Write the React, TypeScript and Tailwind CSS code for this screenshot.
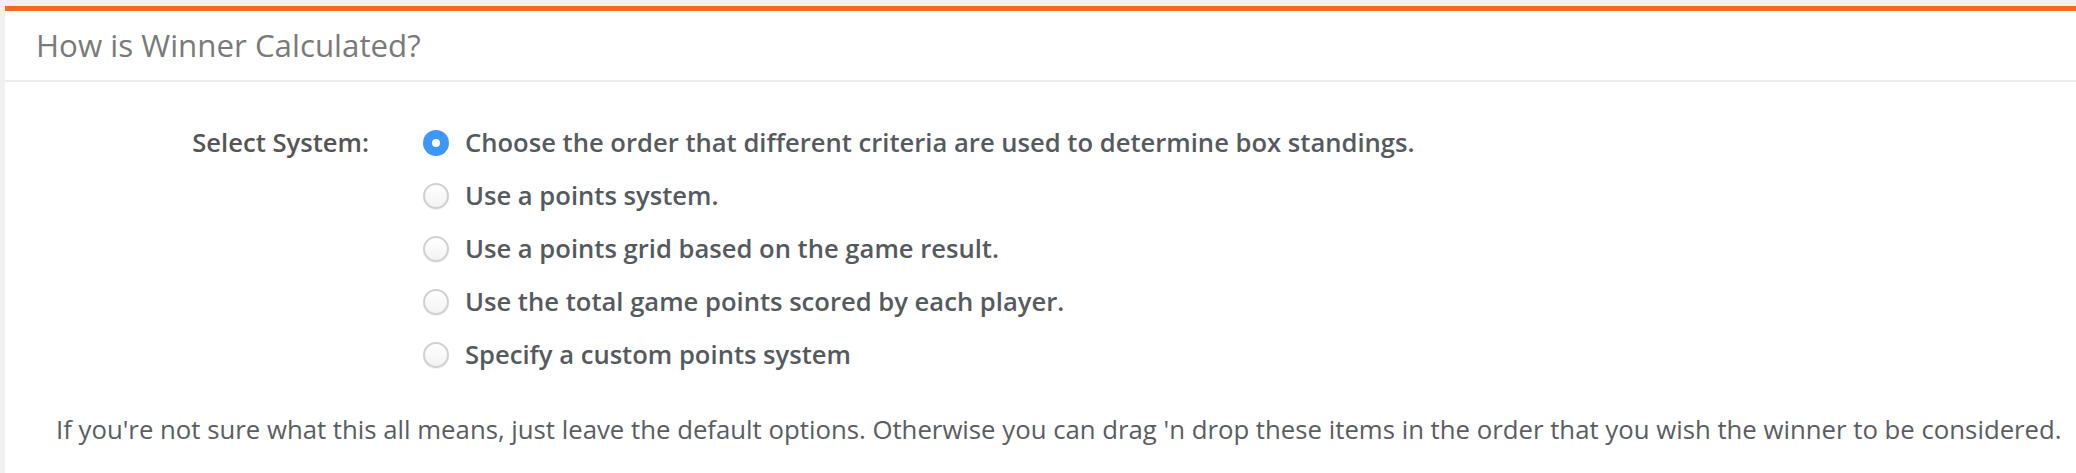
const options = [
  "Choose the order that different criteria are used to determine box standings.",
  "Use a points system.",
  "Use a points grid based on the game result.",
  "Use the total game points scored by each player.",
  "Specify a custom points system",
];

function Radio({ checked }: { checked: boolean }) {
  if (checked) {
    return (
      <span className="flex h-[26px] w-[26px] shrink-0 items-center justify-center rounded-full bg-[#3d97f7]">
        <span className="h-[8px] w-[8px] rounded-full bg-white" />
      </span>
    );
  }
  return (
    <span className="h-[26px] w-[26px] shrink-0 rounded-full border-2 border-[#d0d0d0] bg-gradient-to-b from-white to-[#f3f3f3] shadow-[0_1px_1px_rgba(0,0,0,0.06)]" />
  );
}

export default function App() {
  const selected = 0;
  return (
    <div className="min-h-screen bg-[#f1f1f1] pl-[5px] pt-[6px] font-['Open_Sans',sans-serif]">
      <div className="border-t-[5px] border-[#f26a21] bg-white">
        {/* Header */}
        <div className="flex h-[69px] items-center pl-[31px]">
          <h2 className="text-[31.3px] leading-none font-normal text-[#7a7a7a]">How is Winner Calculated?</h2>
        </div>
        <div className="h-[2px] bg-[#ececec]" />

        {/* Body */}
        <div className="ml-[2px] bg-white pt-[34px] pb-[30px]">
          <div className="flex">
            <div className="w-[362px]">
              <div className="flex h-[53px] items-center justify-end text-[25.6px] leading-none font-semibold text-[#555]">
                Select System:
              </div>
            </div>
            <div className="ml-[54px] flex flex-col">
              {options.map((opt, i) => (
                <label key={opt} className="flex h-[53px] items-center gap-[16px]">
                  <Radio checked={i === selected} />
                  <span className="text-[25.6px] leading-none font-semibold text-[#555a5f]">{opt}</span>
                </label>
              ))}
            </div>
          </div>
          <p className="mt-[36px] pl-[49px] text-[25.75px] leading-none text-[#5a5d62]">
            If you're not sure what this all means, just leave the default options. Otherwise you can drag 'n drop these items in the order that you wish the winner to be considered.
          </p>
        </div>
      </div>
    </div>
  );
}
